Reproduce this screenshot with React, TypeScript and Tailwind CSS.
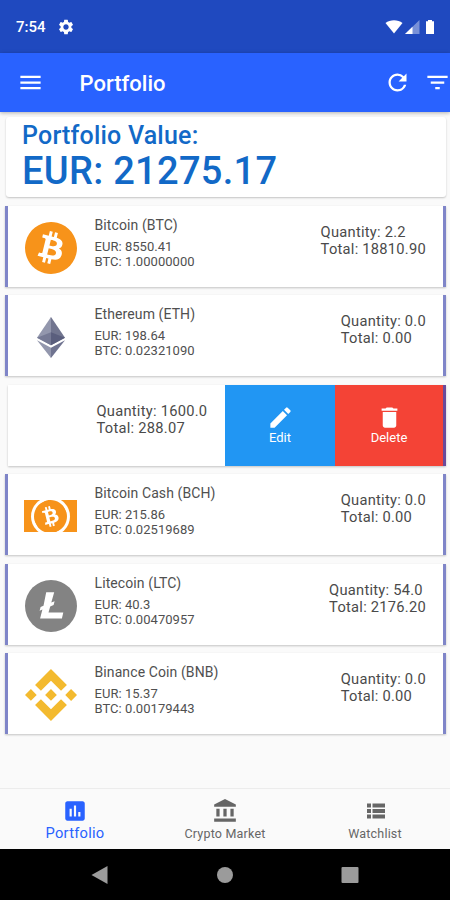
import React from "react";
import { SiBitcoin, SiBinance } from "react-icons/si";
import {
  MdSettings,
  MdMenu,
  MdRefresh,
  MdFilterList,
  MdEdit,
  MdDelete,
  MdInsertChart,
  MdAccountBalance,
} from "react-icons/md";

type Coin = {
  name: string;
  eur: string;
  btc: string;
  quantity: string;
  total: string;
  logo: React.ReactNode;
};

function EthereumLogo() {
  return (
    <svg viewBox="0 0 784 1277" preserveAspectRatio="none" className="h-[41px] w-[28px]">
      <path fill="#71758f" d="M392 0L383 29V873L392 882L784 650z" />
      <path fill="#9397ad" d="M392 0L0 650L392 882V472z" />
      <path fill="#6f7390" d="M392 956L387 962V1263L392 1277L784 725z" />
      <path fill="#9397ad" d="M392 1277V956L0 725z" />
      <path fill="#5a5e7d" d="M392 882L784 650L392 472z" />
      <path fill="#767a95" d="M0 650L392 882V472z" />
    </svg>
  );
}

function BitcoinCashLogo() {
  return (
    <div className="relative flex h-[32px] w-[53px] items-center justify-center overflow-hidden bg-[#f7931a]">
      <div className="absolute flex size-[39px] items-center justify-center rounded-full bg-white">
        <SiBitcoin className="size-[33px] -rotate-[28deg] text-[#f7931a]" />
      </div>
    </div>
  );
}

function LitecoinLogo() {
  return (
    <svg viewBox="0 0 52 52" className="size-[52px]">
      <circle cx="26" cy="26" r="26" fill="#838383" />
      <path
        fill="white"
        d="M21.200 12.200H29.200L26.300 22.600L29.600 21.300L28.600 25L25.200 26.400L23.500 32.600H38.300L36.900 38.400H15.100L17.400 29.600L14.600 30.700L15.600 27L18.500 25.800z"
      />
    </svg>
  );
}

const before: Coin[] = [
  {
    name: "Bitcoin (BTC)",
    eur: "8550.41",
    btc: "1.00000000",
    quantity: "2.2",
    total: "18810.90",
    logo: <SiBitcoin className="size-[52px] text-[#f7931a]" />,
  },
  {
    name: "Ethereum (ETH)",
    eur: "198.64",
    btc: "0.02321090",
    quantity: "0.0",
    total: "0.00",
    logo: <EthereumLogo />,
  },
];

const after: Coin[] = [
  {
    name: "Bitcoin Cash (BCH)",
    eur: "215.86",
    btc: "0.02519689",
    quantity: "0.0",
    total: "0.00",
    logo: <BitcoinCashLogo />,
  },
  {
    name: "Litecoin (LTC)",
    eur: "40.3",
    btc: "0.00470957",
    quantity: "54.0",
    total: "2176.20",
    logo: <LitecoinLogo />,
  },
  {
    name: "Binance Coin (BNB)",
    eur: "15.37",
    btc: "0.00179443",
    quantity: "0.0",
    total: "0.00",
    logo: <SiBinance className="size-[52px] text-[#f3ba2f]" />,
  },
];

function Holding({ quantity, total }: { quantity: string; total: string }) {
  return (
    <div className="text-[14.7px] leading-[17px] tracking-[0.25px] whitespace-nowrap text-[#4a4a4a]">
      <p>Quantity: {quantity}</p>
      <p>Total: {total}</p>
    </div>
  );
}

function CoinRow({ coin }: { coin: Coin }) {
  return (
    <li className="flex h-[81px] border-x-[3px] border-[#7f85c8] bg-white shadow-[0_1px_2px_rgba(0,0,0,0.22)]">
      <div className="ml-[15.5px] flex w-[54px] items-center justify-center pt-[3px]">{coin.logo}</div>
      <div className="ml-[17px] flex-1 pt-[10px] whitespace-nowrap text-[#505050]">
        <p className="text-[14px] leading-[18px] tracking-[0.1px]">{coin.name}</p>
        <p className="mt-[5px] text-[13px] leading-[15px] tracking-[0.04px]">EUR: {coin.eur}</p>
        <p className="text-[13px] leading-[15px] tracking-[0.04px]">BTC: {coin.btc}</p>
      </div>
      <div className="mr-[17px] pt-[18px]">
        <Holding quantity={coin.quantity} total={coin.total} />
      </div>
    </li>
  );
}

function StatusBar() {
  return (
    <div className="flex h-[53px] items-center bg-[#1f49bf] pt-px pr-[14px] pl-[16px] text-white">
      <span className="text-[15px] font-medium">7:54</span>
      <MdSettings className="ml-[11px] size-[18px]" />
      <svg viewBox="0 0 52 16" className="ml-auto h-[16px] w-[52px]" fill="white">
        <path d="M1.500 4C6 .2 14 .2 18.500 4L10 14.500z" />
        <path d="M35.500 1v14H21z" fillOpacity=".4" />
        <path d="M28.500 7.700V15H21z" />
        <path d="M42 2.300h2V1h4v1.300h2V15h-8z" />
      </svg>
    </div>
  );
}

function ListIcon() {
  return (
    <svg viewBox="0 0 26 26" className="size-[26px]" fill="currentColor">
      <path d="M5 5.500h4v4H5zM10.500 5.500H23v4H10.500zM5 11h4v4H5zM10.500 11H23v4H10.500zM5 16.500h4v4H5zM10.500 16.500H23v4H10.500z" />
    </svg>
  );
}

export default function App() {
  return (
    <div className="flex h-[900px] w-[450px] flex-col overflow-hidden bg-[#fafafa] font-['Roboto',sans-serif]">
      <StatusBar />
      <header className="flex h-[59px] shrink-0 items-center bg-[#2962ff] pl-[17px] text-white shadow-[0_1px_4px_rgba(0,0,0,0.3)]">
        <MdMenu className="size-[27px]" />
        <h1 className="ml-[35.5px] pt-px text-[22px] font-medium">Portfolio</h1>
        <MdRefresh className="ml-auto size-[27px]" />
        <MdFilterList className="-mr-[1px] ml-[13px] size-[27px]" />
      </header>

      <main className="flex-1 pt-[5px] pr-[4px] pl-[5px]">
        <section className="ml-[1px] h-[80px] rounded-[3px] bg-white pt-[5px] pl-[16px] font-medium whitespace-nowrap text-[#1269c7] shadow-[0_1px_2px_rgba(0,0,0,0.22)]">
          <p className="text-[25px] leading-[27px] tracking-[0.2px]">Portfolio Value:</p>
          <p className="text-[38px] leading-[44px] tracking-[0.3px]">EUR: 21275.17</p>
        </section>
        <ul className="mt-[9px] flex flex-col gap-[8.400px]">
          {before.map((c) => (
            <CoinRow key={c.name} coin={c} />
          ))}
          <li className="ml-[3px] flex h-[81px] border-r-[3px] border-[#6a4a9a] bg-white shadow-[0_1px_2px_rgba(0,0,0,0.22)]">
            <div className="w-[217px] pt-[18px] pl-[88.500px]">
              <Holding quantity="1600.0" total="288.07" />
            </div>
            <button className="flex w-[110px] flex-col items-center bg-[#2196f3] pt-[19px] text-[13px] leading-[14px] text-white">
              <MdEdit className="size-[27px]" />
              Edit
            </button>
            <button className="flex flex-1 flex-col items-center bg-[#f44336] pt-[19px] text-[13px] leading-[14px] text-white">
              <MdDelete className="size-[27px]" />
              Delete
            </button>
          </li>
          {after.map((c) => (
            <CoinRow key={c.name} coin={c} />
          ))}
        </ul>
      </main>

      <nav className="grid h-[61px] shrink-0 grid-cols-3 border-t border-[#ececec] text-[#666]">
        <div className="flex flex-col items-center pt-[9px] text-[#2962ff]">
          <MdInsertChart className="size-[26px]" />
          <span className="text-[14.7px] leading-[18px] tracking-[0.25px]">Portfolio</span>
        </div>
        <div className="flex flex-col items-center pt-[9px]">
          <MdAccountBalance className="size-[26px]" />
          <span className="text-[12.5px] leading-[20px] tracking-[0.2px]">Crypto Market</span>
        </div>
        <div className="flex flex-col items-center pt-[9px]">
          <ListIcon />
          <span className="text-[12.5px] leading-[20px] tracking-[0.2px]">Watchlist</span>
        </div>
      </nav>
      <div className="h-[51px] shrink-0 bg-black">
        <svg viewBox="0 0 450 51" className="h-[51px] w-[450px]" fill="#9b9b9b">
          <path d="M107.500 17v18L91.500 26z" />
          <circle cx="225" cy="26" r="8" />
          <rect x="341.500" y="18" width="17" height="16" rx="1" />
        </svg>
      </div>
    </div>
  );
}
